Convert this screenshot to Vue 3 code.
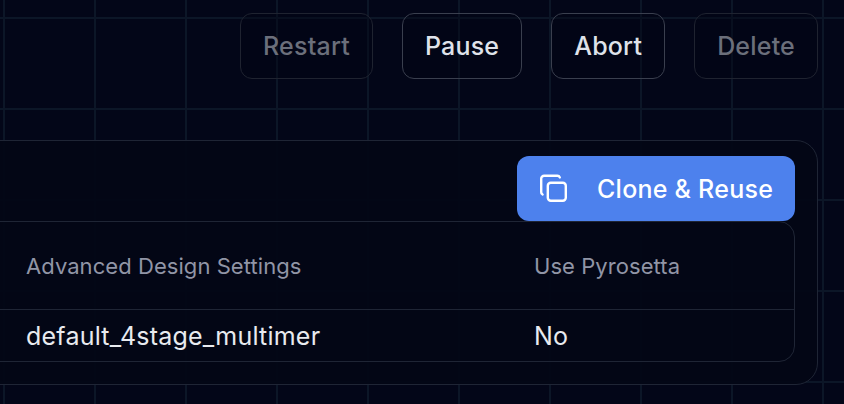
<script setup>
const actions = [
  { label: 'Restart', disabled: true },
  { label: 'Pause', disabled: false },
  { label: 'Abort', disabled: false },
  { label: 'Delete', disabled: true },
]
</script>

<template>
  <div class="page">
    <div class="actions">
      <button
        v-for="a in actions"
        :key="a.label"
        class="action"
        :class="{ off: a.disabled }"
      >{{ a.label }}</button>
    </div>

    <section class="panel">
      <div class="panel-head">
        <button class="clone">
          <svg class="clone-icon" viewBox="0 0 30 30" fill="none" stroke="currentColor" stroke-width="2.4" stroke-linecap="round" stroke-linejoin="round">
            <rect x="8.8" y="8.8" width="18" height="18" rx="3" />
            <path d="M3.6 20.5 A2.6 2.6 0 0 1 2.2 18 V4.8 A3 3 0 0 1 5.2 1.8 H18.4 A2.6 2.6 0 0 1 20.8 3.4" />
          </svg>
          <span class="clone-label">Clone &amp; Reuse</span>
        </button>
      </div>
      <div class="table">
        <div class="cell head first">Advanced Design Settings</div>
        <div class="cell head">Use Pyrosetta</div>
        <div class="cell first">default_4stage_multimer</div>
        <div class="cell">No</div>
      </div>
    </section>
  </div>
</template>

<style scoped>
.page {
  width: 844px;
  height: 404px;
  overflow: hidden;
  box-sizing: border-box;
  padding-top: 13px;
  font-family: Inter, "Liberation Sans", sans-serif;
  background-color: #030618;
  background-image:
    linear-gradient(to right, #0c1627 2px, transparent 2px),
    linear-gradient(to bottom, #0c1627 2px, transparent 2px);
  background-size: 91px 91px;
  background-position: 3px 17px;
}
.actions {
  display: flex;
  justify-content: flex-end;
  gap: 29px;
  padding-right: 26px;
}
.action {
  height: 66px;
  padding: 0 22px;
  box-sizing: border-box;
  border: 1px solid #3a3f4e;
  border-radius: 12px;
  background: rgba(3, 6, 20, 0.4);
  color: #dfe2ea;
  font: 450 25px/1 Inter, "Liberation Sans", sans-serif;
  letter-spacing: 0.2px;
}
.action.off {
  border-color: #1f2330;
  color: #6b6f7b;
}
.panel {
  width: 858px;
  height: 245px;
  margin: 61px 26px 0 -40px;
  box-sizing: border-box;
  padding: 15px 22px 0 20px;
  border: 1px solid #1f2535;
  border-radius: 22px;
  background: rgba(3, 6, 21, 0.93);
}
.panel-head {
  display: flex;
  justify-content: flex-end;
  height: 65px;
}
.clone {
  display: flex;
  align-items: center;
  width: 278px;
  height: 65px;
  padding: 0 0 0 22px;
  box-sizing: border-box;
  border: 0;
  border-radius: 12px;
  background: #4d81ed;
  color: #fff;
  font: 450 25px/1 Inter, "Liberation Sans", sans-serif;
  letter-spacing: 0.25px;
}
.clone-label {
  padding-top: 2px;
}
.clone-icon {
  width: 30px;
  height: 30px;
  margin-right: 28px;
  flex: none;
}
.table {
  display: grid;
  grid-template-columns: 552px 1fr;
  grid-template-rows: 88px 52px;
  box-sizing: border-box;
  height: 141px;
  border: 1px solid #1f2535;
  border-radius: 16px;
}
.cell {
  display: flex;
  align-items: center;
  padding-bottom: 1px;
  box-sizing: border-box;
  color: #e8eaef;
  font-size: 25px;
  font-weight: 400;
  letter-spacing: 0.22px;
}
.cell.first {
  padding-left: 44px;
}
.cell.head {
  padding-bottom: 0;
  color: #9195a6;
  font-size: 22px;
  font-weight: 400;
  letter-spacing: 0.06px;
  border-bottom: 1px solid #1f2535;
}
</style>

<style>
html, body { margin: 0; background: #030618; }
</style>
